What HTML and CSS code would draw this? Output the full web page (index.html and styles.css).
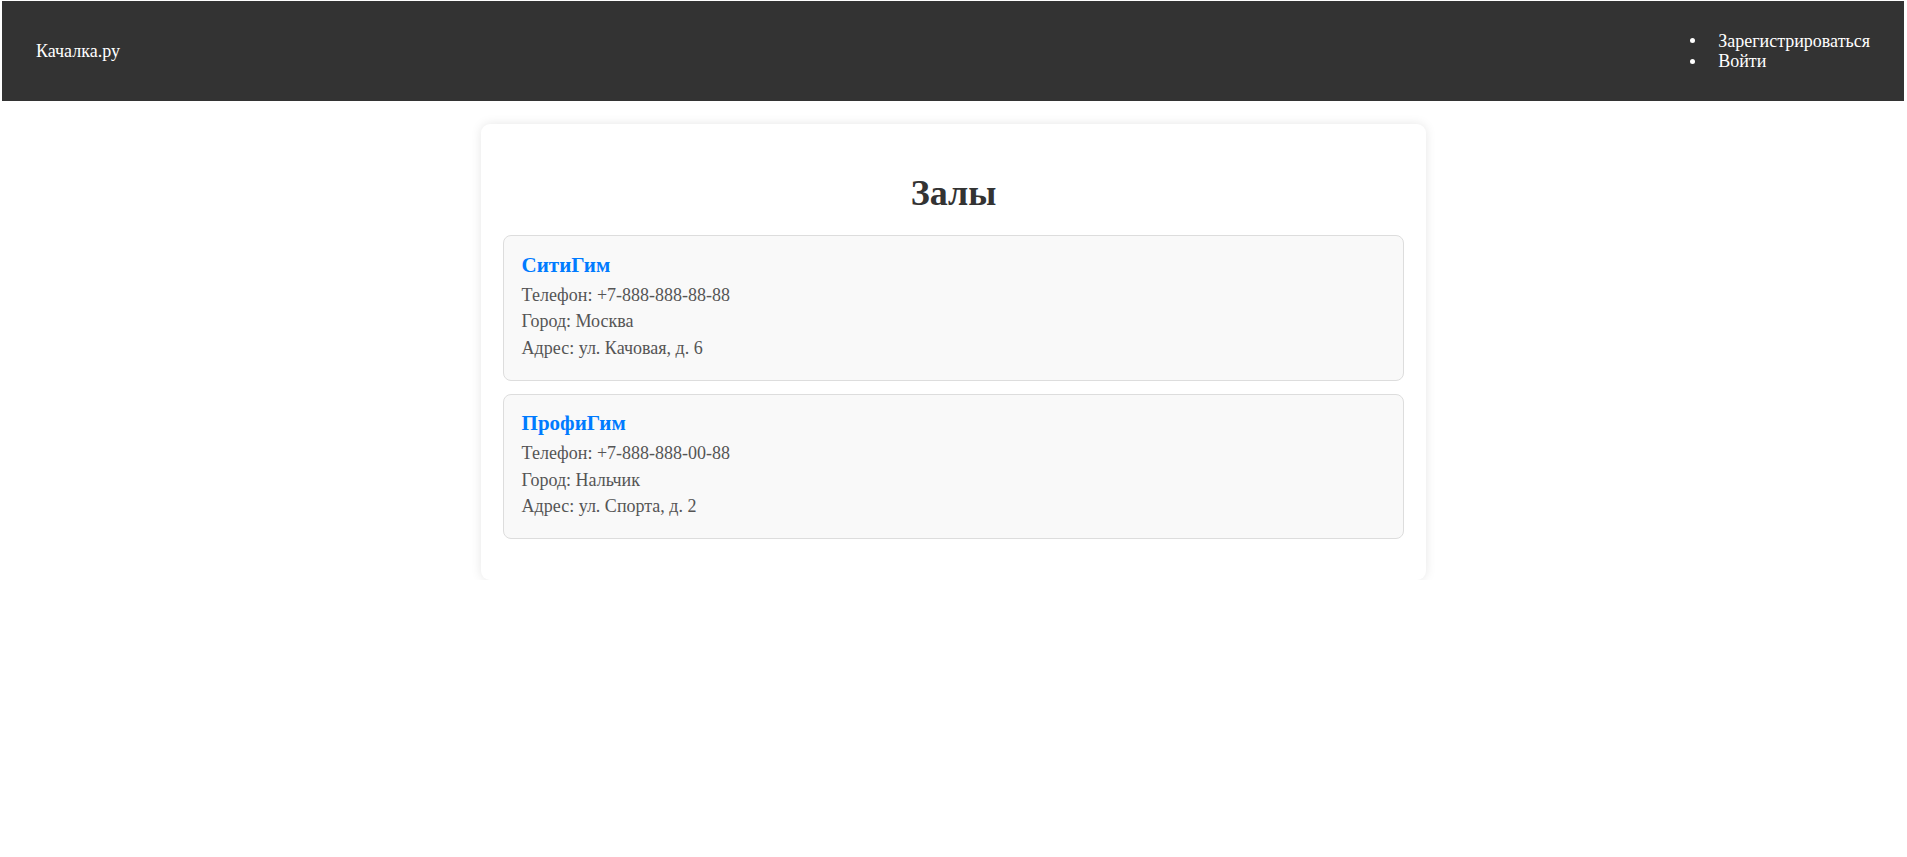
FILE: index.html
```html
<!DOCTYPE html>
<html lang="ru">
<head>
<meta charset="utf-8">
<title>Качалка.ру</title>
<link rel="stylesheet" href="styles.css">
</head>
<body>
<header class="site-header">
  <div class="logo">Качалка.ру</div>
  <ul class="nav">
    <li class="nav-item">Зарегистрироваться</li>
    <li class="nav-item">Войти</li>
  </ul>
</header>
<main class="container">
  <h1 class="title">Залы</h1>
  <div class="gym-list">
    <div class="gym">
      <h3 class="gym-name">СитиГим</h3>
      <p class="gym-line">Телефон: +7-888-888-88-88</p>
      <p class="gym-line">Город: Москва</p>
      <p class="gym-line">Адрес: ул. Качовая, д. 6</p>
    </div>
    <div class="gym">
      <h3 class="gym-name">ПрофиГим</h3>
      <p class="gym-line">Телефон: +7-888-888-00-88</p>
      <p class="gym-line">Город: Нальчик</p>
      <p class="gym-line">Адрес: ул. Спорта, д. 2</p>
    </div>
  </div>
</main>
</body>
</html>
```

FILE: styles.css
```css
html, body {
  margin: 0;
  padding: 0;
  background: #fff;
}

body {
  font-family: "Liberation Serif", "Times New Roman", serif;
  font-size: 18px;
  color: #333;
}

.site-header {
  margin: 1px 3px 0 2px;
  height: 100px;
  background: #333;
  color: #fff;
  display: flex;
  align-items: center;
  justify-content: space-between;
  padding: 0 34px;
}

.logo {
  font-size: 18px;
}

.nav {
  margin: 0;
  padding: 0;
  list-style: none;
  font-size: 18px;
  line-height: 20.2px;
}

.nav-item {
  display: flex;
  align-items: center;
}

.nav-item::before {
  content: "";
  width: 5px;
  height: 5px;
  border-radius: 50%;
  background: #fff;
  margin-right: 23px;
  flex: none;
}

.container {
  width: 945px;
  box-sizing: border-box;
  margin: 23px auto 0;
  padding: 24px 22px 41px;
  background: #fff;
  border-radius: 9px;
  box-shadow: 0 0 11px rgba(0, 0, 0, 0.1);
}

.title {
  margin: 25px 0 22px;
  text-align: center;
  font-size: 36px;
  line-height: 40.4px;
  font-weight: bold;
  color: #333;
}

.gym-list {
  display: flex;
  flex-direction: column;
  gap: 13px;
}

.gym {
  border: 1px solid #ddd;
  border-radius: 8px;
  background: #f9f9f9;
  padding: 17.6px 17.6px 18.6px;
}

.gym-name {
  margin: 0 0 4px;
  font-size: 21px;
  line-height: 23.7px;
  font-weight: bold;
  color: #007bff;
}

.gym-line {
  margin: 0;
  font-size: 18px;
  line-height: 26.5px;
  color: #555;
}
```
